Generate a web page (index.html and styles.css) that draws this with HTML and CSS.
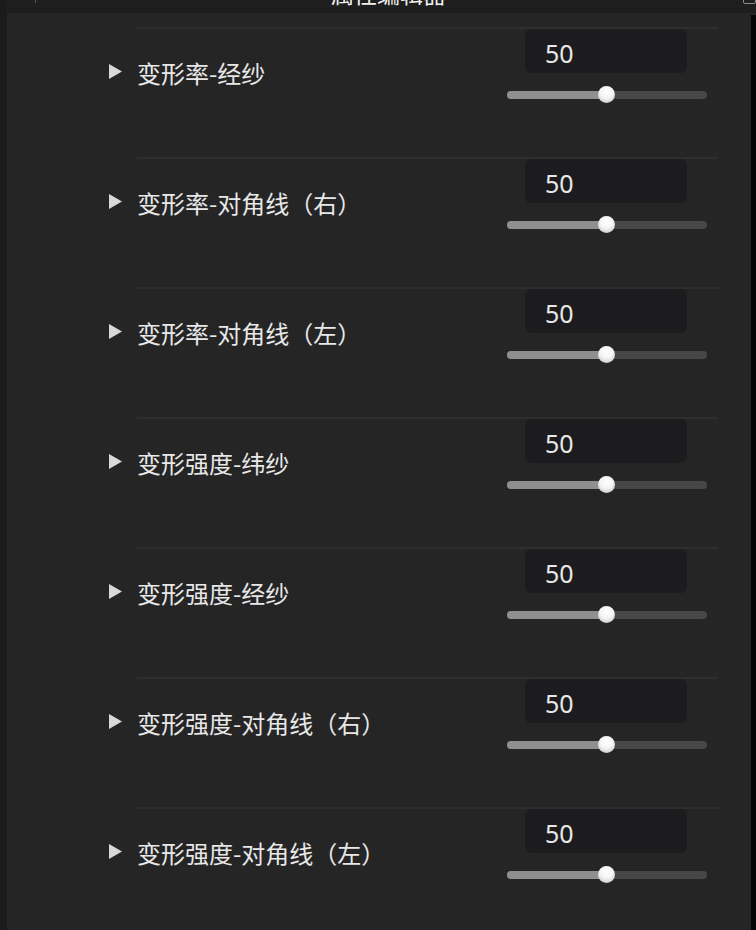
FILE: index.html
```html
<!DOCTYPE html>
<html lang="zh-CN">
<head>
  <meta charset="UTF-8">
  <meta name="viewport" content="width=device-width, initial-scale=1.0">
  <title>属性编辑器</title>
  <link rel="stylesheet" href="styles.css">
</head>
<body>
  <div class="app">
    <div class="gutter"></div>

    <div class="content">
      <header class="titlebar">
        <span class="tick"></span>
        <span class="title">属性编辑器</span>
        <span class="corner"></span>
      </header>

      <div class="panel">
        <div class="prop-list">
          <div class="prop">
            <div class="prop-line"></div>
            <div class="prop-body">
              <div class="prop-label"><svg class="caret" viewBox="0 0 13 15"><polygon points="0,0 13,7.5 0,15" /></svg>变形率-经纱</div>
              <div class="prop-control">
                <div class="num-box">50</div>
                <div class="slider"><div class="slider-fill" style="width: 50%"></div><span class="slider-thumb" style="left: 50%"></span></div>
              </div>
            </div>
          </div>

          <div class="prop">
            <div class="prop-line"></div>
            <div class="prop-body">
              <div class="prop-label"><svg class="caret" viewBox="0 0 13 15"><polygon points="0,0 13,7.5 0,15" /></svg>变形率-对角线（右）</div>
              <div class="prop-control">
                <div class="num-box">50</div>
                <div class="slider"><div class="slider-fill" style="width: 50%"></div><span class="slider-thumb" style="left: 50%"></span></div>
              </div>
            </div>
          </div>

          <div class="prop">
            <div class="prop-line"></div>
            <div class="prop-body">
              <div class="prop-label"><svg class="caret" viewBox="0 0 13 15"><polygon points="0,0 13,7.5 0,15" /></svg>变形率-对角线（左）</div>
              <div class="prop-control">
                <div class="num-box">50</div>
                <div class="slider"><div class="slider-fill" style="width: 50%"></div><span class="slider-thumb" style="left: 50%"></span></div>
              </div>
            </div>
          </div>

          <div class="prop">
            <div class="prop-line"></div>
            <div class="prop-body">
              <div class="prop-label"><svg class="caret" viewBox="0 0 13 15"><polygon points="0,0 13,7.5 0,15" /></svg>变形强度-纬纱</div>
              <div class="prop-control">
                <div class="num-box">50</div>
                <div class="slider"><div class="slider-fill" style="width: 50%"></div><span class="slider-thumb" style="left: 50%"></span></div>
              </div>
            </div>
          </div>

          <div class="prop">
            <div class="prop-line"></div>
            <div class="prop-body">
              <div class="prop-label"><svg class="caret" viewBox="0 0 13 15"><polygon points="0,0 13,7.5 0,15" /></svg>变形强度-经纱</div>
              <div class="prop-control">
                <div class="num-box">50</div>
                <div class="slider"><div class="slider-fill" style="width: 50%"></div><span class="slider-thumb" style="left: 50%"></span></div>
              </div>
            </div>
          </div>

          <div class="prop">
            <div class="prop-line"></div>
            <div class="prop-body">
              <div class="prop-label"><svg class="caret" viewBox="0 0 13 15"><polygon points="0,0 13,7.5 0,15" /></svg>变形强度-对角线（右）</div>
              <div class="prop-control">
                <div class="num-box">50</div>
                <div class="slider"><div class="slider-fill" style="width: 50%"></div><span class="slider-thumb" style="left: 50%"></span></div>
              </div>
            </div>
          </div>

          <div class="prop">
            <div class="prop-line"></div>
            <div class="prop-body">
              <div class="prop-label"><svg class="caret" viewBox="0 0 13 15"><polygon points="0,0 13,7.5 0,15" /></svg>变形强度-对角线（左）</div>
              <div class="prop-control">
                <div class="num-box">50</div>
                <div class="slider"><div class="slider-fill" style="width: 50%"></div><span class="slider-thumb" style="left: 50%"></span></div>
              </div>
            </div>
          </div>
        </div>

        <div class="scrollbar"></div>
      </div>
    </div>
  </div>
</body>
</html>
```

FILE: styles.css
```css
html, body {
  margin: 0;
  height: 100%;
}

body {
  font-family: "Noto Sans", "Noto Sans CJK SC", sans-serif;
  background-color: #252526;
  color: #e6e6e6;
}

.app {
  display: flex;
  height: 930px;
  overflow: hidden;
}

.gutter {
  width: 7px;
  flex-shrink: 0;
  background-color: #1b1b1c;
}

.content {
  flex: 1;
  display: flex;
  flex-direction: column;
  min-width: 0;
}

/* title bar, scrolled so only the bottom of the title shows */
.titlebar {
  position: relative;
  height: 13px;
  flex-shrink: 0;
  display: flex;
  justify-content: center;
  overflow: hidden;
  background-color: #1e1e1f;
}

.title {
  font-family: "Noto Sans CJK SC", sans-serif;
  font-size: 23px;
  line-height: 23px;
  margin-top: -18px;
  padding-left: 14px;
  color: #f2f2f2;
}

.tick {
  position: absolute;
  left: 28px;
  top: 0;
  width: 1px;
  height: 3px;
  background-color: #5a5a5a;
}

.corner {
  position: absolute;
  right: 0;
  top: -6px;
  width: 11px;
  height: 8px;
  border: 1px solid #8a8a8a;
  border-radius: 2px;
}

.panel {
  flex: 1;
  display: flex;
  min-height: 0;
}

.prop-list {
  flex: 1;
  padding-top: 14px;
}

.scrollbar {
  width: 5px;
  flex-shrink: 0;
  margin-top: 2px;
  background-color: #050505;
}

.prop {
  height: 130px;
}

.prop-line {
  height: 2px;
  margin: 0 33px 0 130px;
  background-color: #2e2e2f;
}

.prop-body {
  display: flex;
  align-items: flex-start;
  padding-left: 102px;
}

.prop-label {
  flex: 1;
  display: flex;
  align-items: center;
  margin-top: 32px;
  font-family: "Noto Sans CJK SC", sans-serif;
  font-size: 24px;
  line-height: 24px;
  color: #e8e8e8;
}

.caret {
  width: 13px;
  height: 15px;
  margin: -3px 15px 0 0;
  fill: #d9d9d9;
}

.prop-control {
  width: 200px;
  margin-right: 44px;
  display: flex;
  flex-direction: column;
  align-items: flex-start;
}

.num-box {
  box-sizing: border-box;
  width: 162px;
  height: 44px;
  margin-left: 18px;
  padding: 4px 0 0 20px;
  border-radius: 6px;
  background-color: #1c1c1e;
  font-size: 25px;
  line-height: 40px;
  color: #e8e8e8;
}

.slider {
  position: relative;
  width: 200px;
  height: 8px;
  margin-top: 18px;
  border-radius: 4px;
  background-color: #474747;
}

.slider-fill {
  height: 100%;
  border-radius: 4px;
  background-color: #8f8f8f;
}

.slider-thumb {
  position: absolute;
  top: -5px;
  width: 17px;
  height: 17px;
  margin-left: -9px;
  border-radius: 50%;
  background: radial-gradient(circle at 50% 35%, #ffffff 0%, #f4f4f4 45%, #c8c8c8 85%, #9a9a9a 100%);
}
```
